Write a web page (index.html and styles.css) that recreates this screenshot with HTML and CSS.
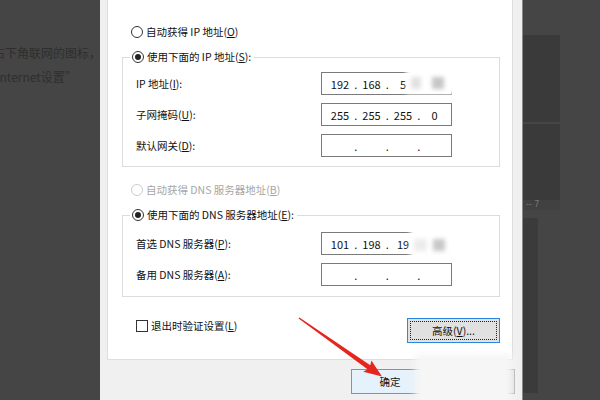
FILE: index.html
```html
<!doctype html>
<html>
<head>
<meta charset="utf-8">
<title>Internet 协议版本 4 (TCP/IPv4) 属性</title>
<link rel="stylesheet" href="styles.css">
</head>
<body>
<div class="page-left">
	<p class="cut-1">右下角联网的图标，</p>
	<p class="cut-2">Internet设置”</p>
</div>

<div class="dialog">
	<div class="panel">
		<div class="option">
			<span class="radio"></span>自动获得 IP 地址(<u>O</u>)
		</div>

		<fieldset class="group">
			<legend class="option"><span class="radio on"></span>使用下面的 IP 地址(<u>S</u>):</legend>
			<div class="field">
				<label>IP 地址(<u>I</u>):</label>
				<div class="ip">
					<span class="seg">192</span><span class="dot">.</span>
					<span class="seg">168</span><span class="dot">.</span>
					<span class="seg">5</span><span class="dot">.</span>
					<span class="seg"></span>
					<div class="smudge smudge-ip"><i class="s1"></i><i class="s2"></i></div>
				</div>
			</div>
			<div class="field">
				<label>子网掩码(<u>U</u>):</label>
				<div class="ip">
					<span class="seg">255</span><span class="dot">.</span>
					<span class="seg">255</span><span class="dot">.</span>
					<span class="seg">255</span><span class="dot">.</span>
					<span class="seg">0</span>
				</div>
			</div>
			<div class="field">
				<label>默认网关(<u>D</u>):</label>
				<div class="ip">
					<span class="seg"></span><span class="dot">.</span>
					<span class="seg"></span><span class="dot">.</span>
					<span class="seg"></span><span class="dot">.</span>
					<span class="seg"></span>
				</div>
			</div>
		</fieldset>

		<div class="option disabled">
			<span class="radio"></span>自动获得 DNS 服务器地址(<u>B</u>)
		</div>

		<fieldset class="group group-dns">
			<legend class="option"><span class="radio on"></span>使用下面的 DNS 服务器地址(<u>E</u>):</legend>
			<div class="field">
				<label>首选 DNS 服务器(<u>P</u>):</label>
				<div class="ip">
					<span class="seg">101</span><span class="dot">.</span>
					<span class="seg">198</span><span class="dot">.</span>
					<span class="seg">19</span><span class="dot">.</span>
					<span class="seg"></span>
					<div class="smudge smudge-dns"><i class="s1"></i><i class="s2"></i></div>
				</div>
			</div>
			<div class="field">
				<label>备用 DNS 服务器(<u>A</u>):</label>
				<div class="ip">
					<span class="seg"></span><span class="dot">.</span>
					<span class="seg"></span><span class="dot">.</span>
					<span class="seg"></span><span class="dot">.</span>
					<span class="seg"></span>
				</div>
			</div>
		</fieldset>

		<div class="bottom-row">
			<div class="option check-row"><span class="check"></span>退出时验证设置(<u>L</u>)</div>
			<div class="btn btn-focus"><span>高级(<u>V</u>)...</span></div>
		</div>
	</div>

	<div class="footer">
		<div class="btn btn-ok">确定</div>
		<div class="btn">取消</div>
	</div>
	<div class="smudge smudge-footer"></div>
</div>

<div class="page-right">
	<div class="shot">
		<div class="shot-top"></div>
		<div class="shot-mid"></div>
		<div class="shot-bar">-- 7</div>
	</div>
	<div class="shot-low"></div>
</div>

<svg class="arrow" width="600" height="400" viewBox="0 0 600 400">
	<polygon points="299.4,317.4 370.3,365.3 371.4,360.4 382,376.5 363.3,371.8 367.5,369.3 298.6,318.6" fill="#e5261f"/>
</svg>
</body>
</html>
```

FILE: styles.css
```css
* {
	box-sizing: border-box;
	margin: 0;
	padding: 0;
}

body {
	background: #454545;
	display: flex;
	font-family: "Noto Sans CJK SC", "Noto Sans", sans-serif;
	font-size: 10.5px;
	height: 400px;
	overflow: hidden;
	position: relative;
	width: 600px;
}

u {
	text-decoration: underline;
	text-underline-offset: 1px;
}

/* page behind the dialog */
.page-left {
	color: #2e2e2e;
	flex: none;
	font-size: 12px;
	line-height: 24px;
	overflow: hidden;
	padding-top: 41px;
	white-space: nowrap;
	width: 100px;
}

.cut-1 {
	margin-left: -7px;
}

.cut-2 {
	margin-left: -4px;
}

.page-right {
	flex: 1;
	padding-top: 35px;
}

.shot {
	background: #3a3a3a;
	height: 175px;
	width: 37px;
}

.shot-top {
	border-bottom: 2px solid #464646;
	height: 89px;
}

.shot-mid {
	height: 76px;
}

.shot-bar {
	background: #414141;
	color: #777;
	font-family: "DejaVu Sans", sans-serif;
	font-size: 8px;
	height: 10px;
	line-height: 10px;
	padding-left: 3px;
	white-space: nowrap;
}

.shot-low {
	background: #3b3b3b;
	height: 175px;
	margin-top: 8px;
	width: 15px;
}

/* dialog */
.dialog {
	background: #f0f0f0;
	border-right: 1px solid #8a8a8a;
	color: #111;
	flex: none;
	padding: 0 9px 0 7px;
	position: relative;
	width: 423px;
}

.panel {
	background: #fff;
	border: 1px solid #dedede;
	border-top: 0;
	height: 360px;
	padding-top: 24px;
}

.option {
	align-items: center;
	display: flex;
	height: 16px;
	line-height: 16px;
	margin-left: 23px;
	white-space: nowrap;
}

.radio {
	border: 1px solid #333;
	border-radius: 50%;
	display: flex;
	align-items: center;
	justify-content: center;
	height: 12px;
	margin-right: 3px;
	width: 12px;
}

.radio.on::after {
	background: #222;
	border-radius: 50%;
	content: "";
	height: 6px;
	width: 6px;
}

.disabled {
	color: #a6a6a6;
	margin-top: 15px;
}

.disabled .radio {
	border-color: #cccccc;
}

.group {
	border: 1px solid #dcdcdc;
	margin: 9px 12px 0 14px;
	padding: 7px 0 9px 7px;
}

.group-dns {
	padding-top: 9px;
	padding-bottom: 10px;
}

.group legend.option {
	margin-left: 0;
	padding: 0 3px 0 2px;
}

.field {
	align-items: center;
	display: flex;
	height: 23px;
	margin-left: 6px;
}

.field + .field {
	margin-top: 8px;
}

.field label {
	width: 185px;
}

.ip {
	align-items: center;
	background: #fff;
	border: 1px solid #7a7a7a;
	display: flex;
	font-size: 11px;
	height: 23px;
	padding-left: 4px;
	position: relative;
	width: 131px;
}

.seg {
	text-align: center;
	width: 28px;
}

.dot {
	text-align: center;
	width: 3.5px;
}

/* watermark smudges left on the screenshot */
.smudge {
	background: #fff;
	filter: blur(2px);
	position: absolute;
}

.smudge i {
	position: absolute;
}

.smudge-ip {
	height: 31px;
	left: 84px;
	top: -10px;
	width: 51px;
}

.smudge-ip .s1 {
	background: #e2e2e2;
	height: 12px;
	left: 5px;
	top: 14px;
	width: 10px;
}

.smudge-ip .s2 {
	background: #c6c6c6;
	height: 12px;
	left: 26px;
	top: 14px;
	width: 12px;
}

.smudge-dns {
	height: 32px;
	left: 88px;
	top: -6px;
	width: 48px;
}

.smudge-dns .s1 {
	background: #ececec;
	height: 12px;
	left: 4px;
	top: 12px;
	width: 13px;
}

.smudge-dns .s2 {
	background: #c8c8c8;
	height: 12px;
	left: 23px;
	top: 12px;
	width: 12px;
}

.smudge-footer {
	background: #f6f6f6;
	filter: blur(3px);
	height: 50px;
	left: 315px;
	top: 354px;
	width: 97px;
}

.bottom-row {
	align-items: flex-start;
	display: flex;
	justify-content: space-between;
	margin: 21px 12px 0 28px;
}

.check-row {
	margin-left: 0;
}

.check {
	border: 1px solid #333;
	height: 12px;
	margin-right: 3px;
	width: 12px;
}

.btn {
	align-items: center;
	background: #e1e1e1;
	border: 1px solid #adadad;
	display: flex;
	height: 25px;
	justify-content: center;
	white-space: nowrap;
	width: 78px;
}

.btn-focus {
	border-color: #2b88e0;
	padding: 2px;
	width: 93px;
}

.btn-focus span {
	align-items: center;
	border: 1px dotted #222;
	display: flex;
	height: 100%;
	justify-content: center;
	width: 100%;
}

.footer {
	display: flex;
	gap: 8px;
	justify-content: flex-end;
	margin-right: -2px;
	padding-top: 9px;
}

.btn-ok {
	background: #e5f1fb;
	border-color: #5a9de0;
}

.arrow {
	left: 0;
	pointer-events: none;
	position: absolute;
	top: 0;
}
```
